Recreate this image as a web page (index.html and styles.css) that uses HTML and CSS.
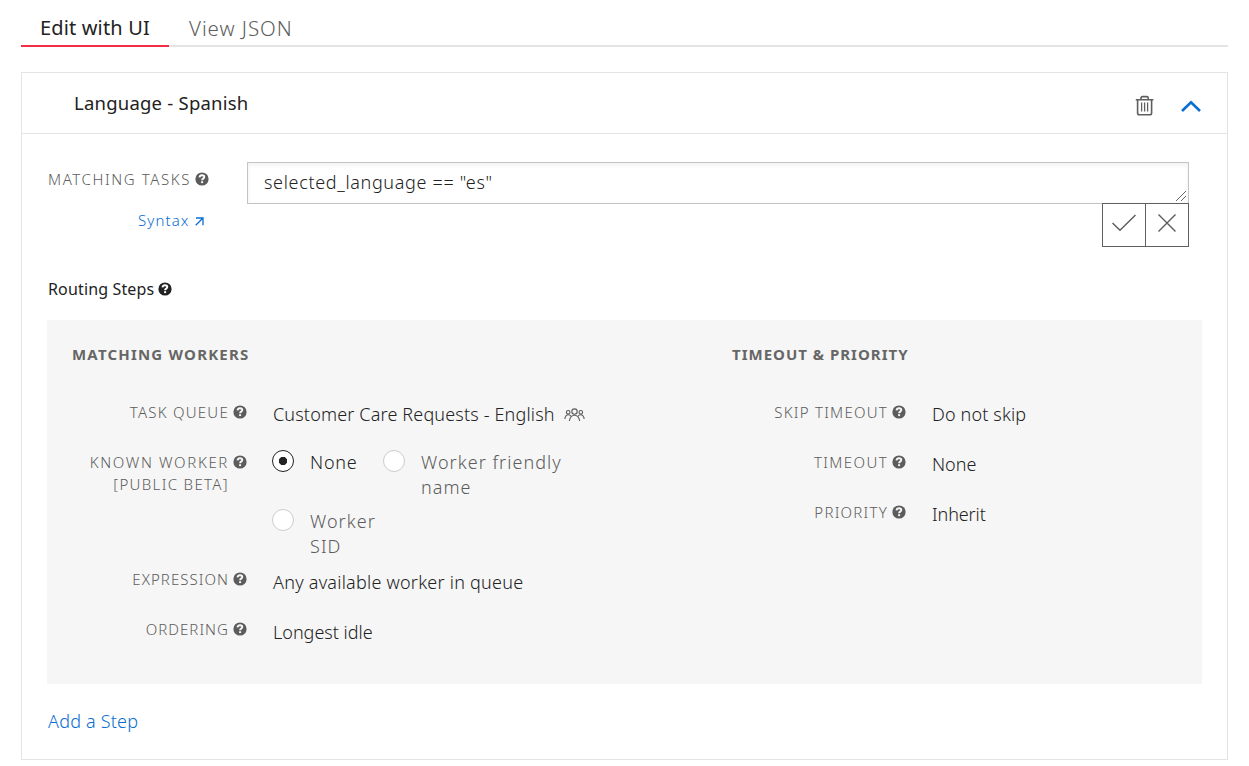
FILE: index.html
```html
<!DOCTYPE html>
<html lang="en">
<head>
<meta charset="utf-8">
<title>Workflow - Language</title>
<link rel="stylesheet" href="styles.css">
</head>
<body>
<svg class="defs" width="0" height="0" aria-hidden="true">
  <symbol id="help" viewBox="0 0 14 14">
    <circle cx="7" cy="7" r="6.6" fill="currentColor"/>
    <path d="M4.500 5.400C4.700 3.900 5.700 3.200 7 3.200c1.400 0 2.300.8 2.300 1.900 0 1.600-2.200 1.500-2.200 3.100" fill="none" stroke="var(--bg, #fff)" stroke-width="1.900"/>
    <path d="M6.100 9.200h2v1.900h-2z" fill="var(--bg, #fff)"/>
  </symbol>
</svg>
<nav class="tabs">
  <a class="tab active"><span class="t-edit">Edit with UI</span></a>
  <a class="tab"><span class="t-view">View JSON</span></a>
</nav>
<section class="card">
  <header class="card-head">
    <h2 class="title">Language - Spanish</h2>
    <svg class="trash" width="20" height="22" viewBox="0 0 20 22" fill="none" stroke="#5f5f5f" stroke-width="1.600">
      <path d="M.8 4.700h17.600M6 4.300V3q0-1.400 1.400-1.400h4.400q1.400 0 1.400 1.400v1.300M2.600 5v13q0 1.800 1.800 1.800h10.400q1.800 0 1.800-1.800V5"/>
      <path d="M6.600 7.500v9M9.600 7.500v9M12.600 7.500v9" stroke-width="1.300"/>
    </svg>
    <svg class="chevron" width="20" height="13" viewBox="0 0 20 13" fill="none" stroke="#0a6ed1" stroke-width="2.600"><path d="M1 11 10 2.200l9 8.800"/></svg>
  </header>
  <div class="card-body">
    <div class="filter">
      <div class="filter-labels">
        <div class="label"><span class="l-mt">MATCHING TASKS</span><svg class="help"><use href="#help"/></svg></div>
        <a class="syntax"><span>Syntax</span><svg width="9" height="9" viewBox="0 0 9 9" fill="none" stroke="#0a6ed1" stroke-width="1.300"><path d="M.7 8.300 8 1M1 1h7v7.300"/></svg></a>
      </div>
      <div class="editor">
        <div class="input"><span class="expr">selected_language == "es"</span>
          <svg class="grip" width="12" height="12" viewBox="0 0 12 12" stroke="#555" stroke-width=".9"><path d="M1 11 11 1M6 11l5-5"/></svg>
        </div>
        <div class="actions">
          <span class="btn"><svg width="26" height="18" viewBox="0 0 26 18" fill="none" stroke="#5c5c5c" stroke-width="1.400"><path d="m1.500 9 7.500 7.300L24.500 1"/></svg></span>
          <span class="btn"><svg width="20" height="20" viewBox="0 0 20 20" fill="none" stroke="#5c5c5c" stroke-width="1.400"><path d="m1.500 1.500 17 17M18.500 1.500l-17 17"/></svg></span>
        </div>
      </div>
    </div>
    <h3 class="steps-title"><span>Routing Steps</span><svg class="help"><use href="#help"/></svg></h3>
    <div class="step">
      <div class="col workers">
        <h4 class="heading"><span class="h-mw">MATCHING WORKERS</span></h4>
        <div class="row">
          <div class="label"><span class="l-tq">TASK QUEUE</span><svg class="help"><use href="#help"/></svg></div>
          <div class="value"><span class="v-cc">Customer Care Requests - English</span><svg class="people" width="21" height="14" viewBox="0 0 21 14" fill="none" stroke="#5a5a5a" stroke-width="1.100"><circle cx="10.500" cy="3.600" r="2.700"/><circle cx="4.200" cy="4.300" r="1.800"/><circle cx="16.800" cy="4.300" r="1.800"/><path d="M5.300 13C6 9.400 7.400 7.300 10.500 7.300s4.500 2.100 5.200 5.700M.8 11c.4-2.800 1.500-4.300 3.500-4.300 1.200 0 2.100.6 2.800 1.600M20.200 11c-.4-2.800-1.500-4.300-3.500-4.300-1.200 0-2.100.6-2.800 1.600"/></svg></div>
        </div>
        <div class="row known">
          <div class="label"><span class="l-kw">KNOWN WORKER</span><svg class="help"><use href="#help"/></svg><span class="beta">[PUBLIC BETA]</span></div>
          <div class="radios">
            <div class="option on"><i class="radio checked"></i><span class="o-none">None</span></div>
            <div class="option"><i class="radio"></i><span class="o-wf">Worker friendly<br>name</span></div>
            <div class="option"><i class="radio"></i><span class="o-ws">Worker<br>SID</span></div>
          </div>
        </div>
        <div class="row lower">
          <div class="label"><span class="l-ex">EXPRESSION</span><svg class="help"><use href="#help"/></svg></div>
          <div class="value"><span class="v-any">Any available worker in queue</span></div>
        </div>
        <div class="row lower">
          <div class="label"><span class="l-or">ORDERING</span><svg class="help"><use href="#help"/></svg></div>
          <div class="value"><span class="v-li">Longest idle</span></div>
        </div>
      </div>
      <div class="col">
        <h4 class="heading"><span class="h-tp">TIMEOUT &amp; PRIORITY</span></h4>
        <div class="row">
          <div class="label"><span class="l-st">SKIP TIMEOUT</span><svg class="help"><use href="#help"/></svg></div>
          <div class="value"><span class="v-dn">Do not skip</span></div>
        </div>
        <div class="row">
          <div class="label"><span class="l-to">TIMEOUT</span><svg class="help"><use href="#help"/></svg></div>
          <div class="value"><span class="v-no">None</span></div>
        </div>
        <div class="row">
          <div class="label"><span class="l-pr">PRIORITY</span><svg class="help"><use href="#help"/></svg></div>
          <div class="value"><span class="v-in">Inherit</span></div>
        </div>
      </div>
    </div>
    <a class="add">Add a Step</a>
  </div>
</section>
</body>
</html>
```
FILE: styles.css
```css
* { box-sizing: border-box; }
body { margin: 0; padding: 0 21px; background: #fff; color: #222; font-family: "Noto Sans", "Open Sans", sans-serif; font-weight: 300; white-space: nowrap; }
h2, h3, h4 { margin: 0; font-weight: 400; }
svg { display: block; flex: none; }
.defs { position: absolute; }
.help { width: 14px; height: 14px; }

.tabs { display: flex; height: 47px; border-bottom: 2px solid #e4e4e4; }
.tab { width: 148px; height: 47px; padding: 14px 0 0 19px; font-size: 20px; line-height: 28px; color: #5c5c5c; }
.tab.active { color: #222; font-weight: 400; border-bottom: 2px solid #f22f46; }
.t-edit { letter-spacing: .15px; }
.t-view { margin-left: 1px; font-size: 20.500px; letter-spacing: .95px; }

.card { width: 1207px; height: 688px; margin-top: 25px; border: 1px solid #e4e4e4; }
.card-head { display: flex; height: 61px; padding-left: 52px; border-bottom: 1px solid #e4e4e4; }
.title { width: 1061px; padding-top: 17px; font-size: 18.500px; line-height: 26px; letter-spacing: .22px; }
.trash { margin-top: 22px; margin-right: 26px; }
.chevron { margin-top: 27px; }
.card-body { padding: 28px 25px 0; }

.filter { display: flex; height: 85px; }
.filter-labels { width: 200px; padding-left: 1px; }
.filter-labels .label { justify-content: flex-start; padding-top: 6px; }
.label { display: flex; flex-wrap: wrap; justify-content: flex-end; align-items: center; align-content: flex-start; column-gap: 4px; font-size: 15px; line-height: 22px; color: #5c5c5c; letter-spacing: 1.250px; }
.l-mt { letter-spacing: 1.600px; }
.l-kw { letter-spacing: 1.650px; }
.l-to { letter-spacing: 1.400px; }
.l-ex, .l-or { letter-spacing: 1.050px; }
.syntax { display: flex; align-items: center; gap: 6px; padding: 19px 0 0 90px; font-size: 15px; line-height: 22px; color: #0a6ed1; letter-spacing: 1.100px; }
.syntax svg { margin-top: 3px; }
.editor { width: 942px; }
.input { position: relative; height: 42px; padding: 6px 16px; border: 1px solid #c4c4c4; box-shadow: inset 0 2px 4px #f0f0f0; font-size: 18px; line-height: 26px; letter-spacing: .66px; }
.grip { position: absolute; right: 1px; bottom: 1px; }
.actions { position: relative; display: flex; justify-content: flex-end; margin-top: -1px; }
.btn { display: flex; align-items: center; justify-content: center; width: 44px; height: 44px; padding-bottom: 5px; border: 1px solid #606060; background: #fff; }
.btn + .btn { margin-left: -1px; }

.steps-title { display: flex; align-items: center; gap: 4px; padding: 31px 0 0 1px; font-size: 16px; line-height: 22px; letter-spacing: .15px; }
.step { display: flex; width: 1155px; height: 364px; margin-top: 20px; padding: 23px 25px; background: #f6f6f6; --bg: #f6f6f6; }
.col { width: 446px; }
.workers { width: 659px; }
.heading { height: 58px; font-size: 15px; line-height: 22px; font-weight: 700; color: #666; letter-spacing: 1.200px; }
.h-tp { margin-left: 1px; letter-spacing: 1px; }
.row { display: grid; grid-template-columns: 175px auto; column-gap: 26px; height: 50px; align-items: start; font-size: 18px; line-height: 26px; }
.known { height: 117px; }
.lower .value { margin-top: 1px; }
.beta { width: 157px; margin-right: 18px; text-align: right; letter-spacing: 1.350px; }
.value { display: flex; align-items: center; }
.v-cc { letter-spacing: .16px; }
.v-any { letter-spacing: .24px; }
.v-dn { letter-spacing: .15px; }
.v-in { letter-spacing: -.1px; }
.people { margin-left: 9px; margin-top: 2px; }
.radios { display: grid; grid-template-columns: 111px 200px; align-content: start; row-gap: 9px; line-height: 25px; margin-left: -1px; margin-top: -1px; }
.option { display: flex; gap: 16px; color: #5c5c5c; letter-spacing: 1.050px; }
.option.on { color: #222; letter-spacing: .8px; }
.radio { flex: none; width: 22px; height: 22px; border: 1px solid #ccc; border-radius: 50%; background: #fff; }
.radio.checked { border-color: #222; background: radial-gradient(circle, #222 3.800px, #fff 4.500px); }
.add { display: block; margin: 24px 0 0 1px; font-size: 18px; line-height: 26px; color: #0a6ed1; letter-spacing: .2px; }
```
